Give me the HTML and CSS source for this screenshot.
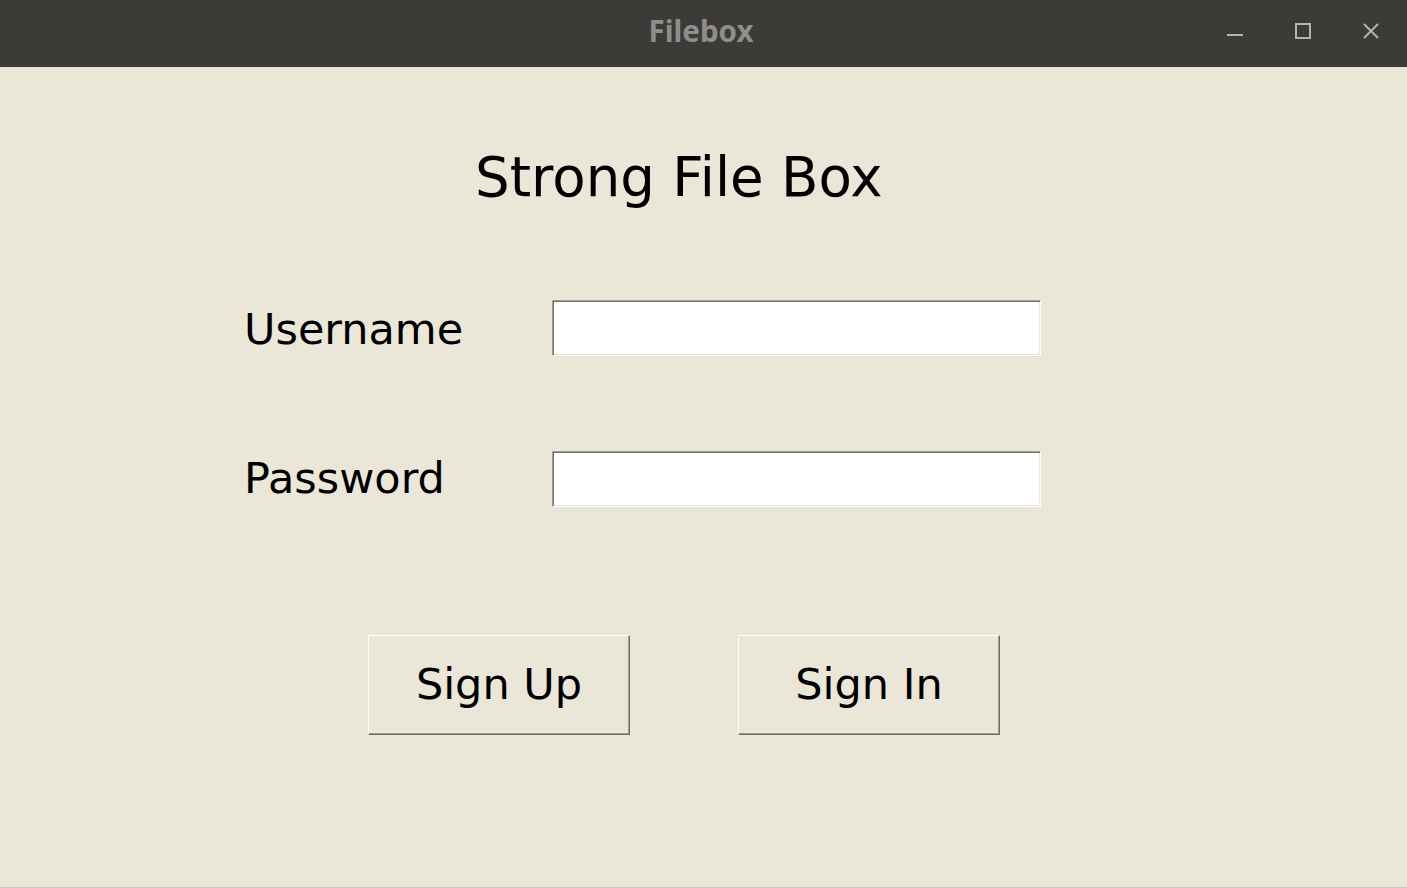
FILE: index.html
```html
<!DOCTYPE html>
<html lang="en">
<head>
<meta charset="utf-8">
<title>Filebox</title>
<link rel="stylesheet" href="styles.css">
</head>
<body>
<div class="window">
  <header class="titlebar">
    <div class="tb-spacer"></div>
    <div class="tb-title">Filebox</div>
    <div class="tb-controls">
      <svg class="tb-icon" width="16" height="16" viewBox="0 0 16 16"><path d="M0 12h16" stroke="#b4b3ae" stroke-width="2" fill="none"/></svg>
      <svg class="tb-icon" width="16" height="16" viewBox="0 0 16 16"><rect x="1" y="1" width="14" height="14" stroke="#b4b3ae" stroke-width="2" fill="none"/></svg>
      <svg class="tb-icon" width="16" height="16" viewBox="0 0 16 16"><path d="M1 1L15 15M15 1L1 15" stroke="#b4b3ae" stroke-width="2" fill="none"/></svg>
    </div>
  </header>
  <main class="content">
    <h1 class="app-title">Strong File Box</h1>
    <div class="form">
      <div class="field-row">
        <label class="field-label" for="user">Username</label>
        <input class="field-input" id="user" type="text">
      </div>
      <div class="field-row field-row-2">
        <label class="field-label label-pass" for="pass">Password</label>
        <input class="field-input" id="pass" type="password">
      </div>
    </div>
    <div class="actions">
      <button class="btn" type="button">Sign Up</button>
      <button class="btn" type="button">Sign In</button>
    </div>
  </main>
</div>
</body>
</html>
```
FILE: styles.css
```css
* { box-sizing: border-box; }
html, body { margin: 0; padding: 0; }
body {
  width: 1407px;
  height: 888px;
  overflow: hidden;
  font-family: "DejaVu Sans", sans-serif;
}
.window {
  display: flex;
  flex-direction: column;
  height: 888px;
}
.titlebar {
  height: 67px;
  flex: none;
  background: #3c3b37;
  display: grid;
  grid-template-columns: 1fr auto 1fr;
  align-items: start;
}
.tb-title {
  font-family: "Noto Sans", "DejaVu Sans", sans-serif;
  font-weight: 700;
  font-size: 29.5px;
  color: #8e8e8c;
  line-height: 1;
  padding-top: 16px;
  margin-right: 5px;
}
.tb-controls {
  display: flex;
  justify-content: flex-end;
  gap: 52px;
  padding-right: 28px;
  height: 67px;
  align-items: flex-start;
  padding-top: 23px;
}
.tb-icon { display: block; }
.content {
  flex: 1;
  background: #ebe7d8;
  border-bottom: 1px solid #cbcbc9;
  padding-top: 79px;
  color: #000;
}
.app-title {
  margin: 0 0 0 475px;
  font-size: 54.6px;
  font-weight: 400;
  line-height: 63px;
  height: 63px;
  white-space: nowrap;
}
.form {
  margin-top: 91px;
  padding-left: 244px;
}
.field-row {
  display: flex;
  align-items: center;
  height: 56px;
}
.field-row-2 { margin-top: 95px; }
.field-label {
  width: 308px;
  font-size: 43px;
  line-height: 43px;
  padding-top: 2px;
}
.label-pass { padding-top: 0; padding-bottom: 2px; }
.field-input {
  width: 489px;
  height: 56px;
  margin: 0;
  background: #fff;
  border: 1px solid;
  border-color: #a19d8e #fffff8 #fffff8 #a19d8e;
  box-shadow: inset 1px 1px 0 #74726a, inset -1px -1px 0 #ebe7d8;
  outline: none;
  font-family: "DejaVu Sans", sans-serif;
  font-size: 28px;
}
.actions {
  display: flex;
  gap: 108px;
  margin-top: 128px;
  padding-left: 368px;
}
.btn {
  width: 262px;
  height: 100px;
  margin: 0;
  padding: 0 0 2px 0;
  background: #ebe7d8;
  border: 1px solid;
  border-color: #fffffa #6d6b65 #6d6b65 #fffffa;
  box-shadow: inset -1px -1px 0 #a19d8f;
  font-family: "DejaVu Sans", sans-serif;
  font-size: 43px;
  line-height: 43px;
  color: #000;
}
```
